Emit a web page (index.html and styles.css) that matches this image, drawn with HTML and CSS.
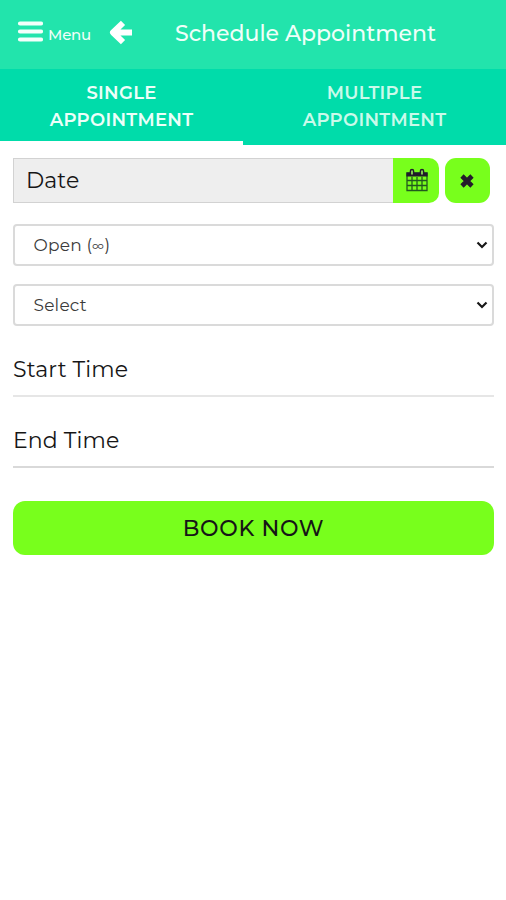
FILE: index.html
```html
<!DOCTYPE html>
<html lang="en">
<head>
<meta charset="utf-8">
<title>Schedule Appointment</title>
<link rel="stylesheet" href="styles.css">
</head>
<body>
<header class="topbar">
  <a class="menu">
    <svg class="bars" viewBox="0 0 26 21"><path d="M3 2.5H24M3 10.5H24M3 18.5H24"/></svg>
    <span class="menu-label">Menu</span>
  </a>
  <svg class="back" viewBox="0 0 24 25"><path d="M14 2.8L4 12.5L14 22.2M5 12.5H23"/></svg>
  <h1 class="title">Schedule Appointment</h1>
</header>
<nav class="tabs">
  <a class="tab active"><span class="tab-first">SINGLE</span><span>APPOINTMENT</span></a>
  <a class="tab"><span class="tab-second">MULTIPLE</span><span>APPOINTMENT</span></a>
</nav>
<main class="form">
  <div class="date-row">
    <div class="date-field"><span class="date-text">Date</span></div>
    <button class="square pick" aria-label="Pick date">
      <svg class="calendar" viewBox="0 0 22 24"><path class="sheet" d="M1 5H21V22.5H1ZM1 12.5H21M1 17.5H21M6 9V22M11 9V22M16 9V22"/><path class="band" d="M.4 4.5H21.6V8.5H.4Z"/><path class="ring-edge" d="M6 3V6M16 3V6"/><path class="ring" d="M6 2.5V6.5M16 2.5V6.5"/></svg>
    </button>
    <button class="square clear" aria-label="Clear date">
      <svg class="cross" viewBox="0 0 16 16"><path d="M3 3L13 13M13 3L3 13"/></svg>
    </button>
  </div>
  <div class="select"><span class="open-text">Open (<span class="infinity">∞</span>)</span><svg class="chevron" viewBox="0 0 12 8"><path d="M1.5 1.5L6 6L10.5 1.5"/></svg></div>
  <div class="select"><span class="select-text">Select</span><svg class="chevron" viewBox="0 0 12 8"><path d="M1.5 1.5L6 6L10.5 1.5"/></svg></div>
  <div class="time start"><span class="start-text">Start Time</span></div>
  <div class="time end"><span class="end-text">End Time</span></div>
  <button class="book"><span>BOOK NOW</span></button>
</main>
</body>
</html>
```
FILE: styles.css
```css
* { box-sizing: border-box; }
body {
  margin: 0;
  min-height: 900px;
  background: #fff;
  color: #161616;
  font-family: Montserrat, Inter, "Liberation Sans", sans-serif;
}
svg { display: block; fill: none; flex: none; }
span { white-space: nowrap; }
button { border: 0; padding: 0; font: inherit; color: inherit; }
.topbar {
  height: 69px;
  display: flex;
  align-items: flex-start;
  background: #22e4ac;
  color: #effff9;
}
.menu { display: flex; margin: 21px 0 0 17px; width: 92px; }
.bars { width: 26px; height: 21px; stroke: #f4fffb; stroke-width: 4.2; stroke-linecap: round; }
.menu-label { margin: 3.5px 0 0 5px; font-size: 15px; line-height: 20px; font-weight: 500; letter-spacing: -0.2px; }
.back { width: 24px; height: 25px; margin-top: 20px; stroke: #fff; stroke-width: 6; stroke-linejoin: round; }
.title {
  margin: 19px 0 0 42px;
  font-size: 22px;
  line-height: 30px;
  font-weight: 500;
  white-space: nowrap;
}
.tabs { display: flex; height: 76px; background: #00dcaa; }
.tab {
  width: 263px;
  padding-top: 11px;
  display: flex;
  flex-direction: column;
  align-items: center;
  color: #c9faea;
  font-size: 18px;
  line-height: 27px;
  font-weight: 600;
  letter-spacing: 0.3px;
}
.tab.active { width: 243px; color: #ecfff9; border-bottom: 4px solid #fff; }
.form { padding: 13px 12px 0 13px; }
.date-row { display: flex; height: 45px; margin-bottom: 21px; }
.date-field {
  width: 380px;
  padding-left: 12px;
  background: #eee;
  border: 1px solid #d2d2d2;
  border-right: 0;
  font-size: 22px;
  line-height: 43px;
  letter-spacing: 0.1px;
}
.square { display: flex; align-items: center; justify-content: center; background: #78ff1c; color: #211b2b; }
.pick { width: 46px; padding-left: 2px; border-radius: 0 10px 10px 0; }
.clear { width: 45px; margin-left: 6px; padding-right: 1px; border-radius: 11px; }
.calendar { width: 22px; height: 24px; margin-bottom: 2px; }
.sheet { stroke: #225a1e; stroke-width: 1.3; }
.band { fill: #211b2b; }
.ring-edge { stroke: #211b2b; stroke-width: 4.6; stroke-linecap: round; }
.ring { stroke: #9bf060; stroke-width: 1.6; }
.cross { width: 16px; height: 16px; stroke: #251c2b; stroke-width: 4.6; }
.select {
  height: 42px;
  margin-bottom: 18px;
  padding: 0 4px 0 18.5px;
  display: flex;
  align-items: center;
  justify-content: space-between;
  border: 2px solid #dadada;
  border-radius: 4px;
  color: #3b3b3b;
  font-size: 17px;
  letter-spacing: 0.2px;
}
.infinity { font-size: 13px; }
.chevron { width: 12px; height: 8px; stroke: #181818; stroke-width: 2.2; }
.time { font-size: 22px; line-height: 30px; letter-spacing: 0.12px; }
.start { height: 53px; padding-top: 11px; border-bottom: 2px solid #e6e6e6; }
.end { height: 71px; padding-top: 29px; border-bottom: 2px solid #d9d9d9; }
.book {
  display: block;
  width: 100%;
  height: 54px;
  margin-top: 33px;
  border-radius: 12px;
  background: #78ff1c;
  font-size: 22px;
  font-weight: 500;
  letter-spacing: 0.7px;
}
```
